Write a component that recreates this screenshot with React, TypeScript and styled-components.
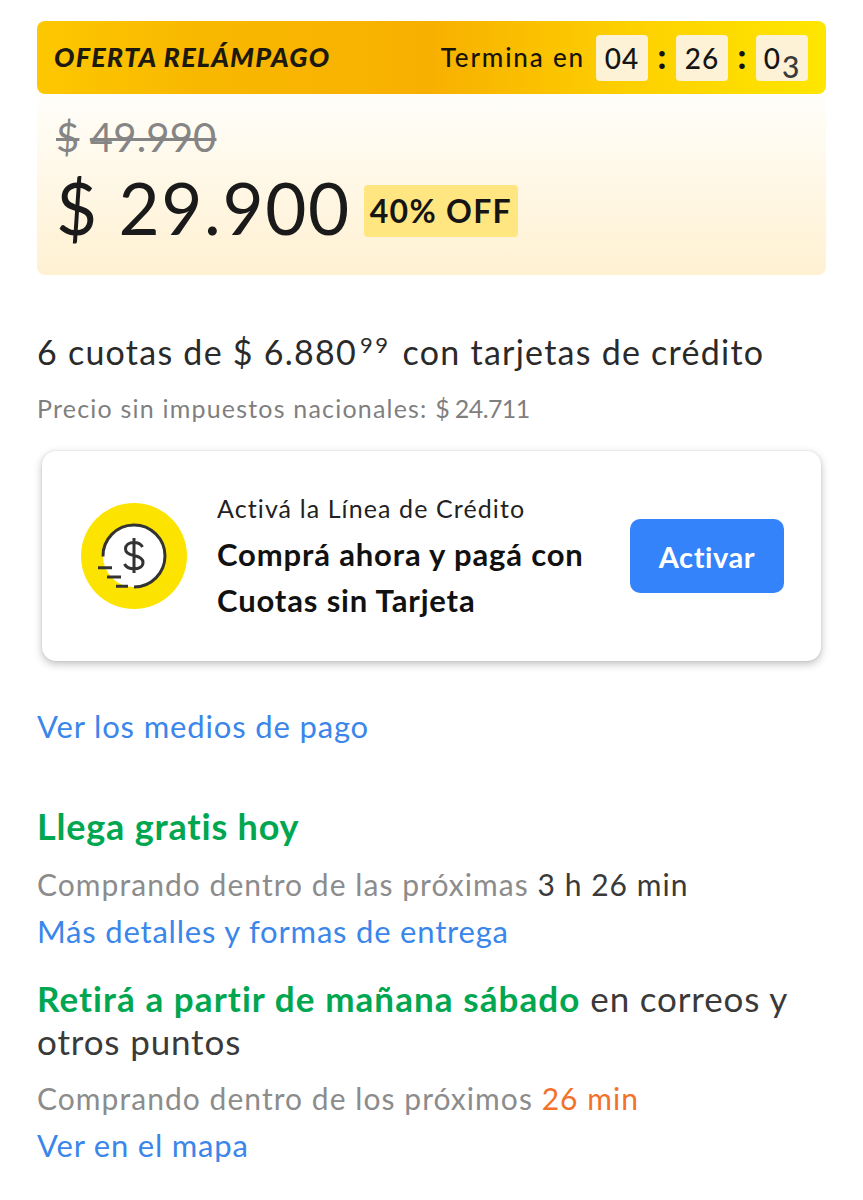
import React from 'react';
import styled, { createGlobalStyle } from 'styled-components';

const Global = createGlobalStyle`
  html, body { margin: 0; padding: 0; background: #fff; }
  body { font-family: Lato, "Noto Sans", sans-serif; color: #1c1c1c; }
`;
const Page = styled.div`
  width: 863px; height: 1200px; box-sizing: border-box; padding: 21px 37px 0 37px; overflow: hidden;
`;
const Banner = styled.div`
  height: 73px; display: flex; align-items: center; justify-content: space-between;
  padding: 0 18px 0 17px; border-radius: 8px;
  background: linear-gradient(90deg, #fdc800 0%, #f9b800 20%, #f8b000 50%, #fdd000 75%, #ffe600 100%);
`;
const Flash = styled.span`
  font-size: 27px; font-weight: 900; font-style: italic; color: #1c1a10; letter-spacing: 1.2px;
  margin-top: -3px;
`;
const Timer = styled.div`
  display: flex; align-items: center;
`;
const TimerLabel = styled.span`
  font-size: 26px; font-weight: 500; color: #15130a; letter-spacing: 1.85px; margin: -2px 11px 0 0;
`;
const Cell = styled.span`
  width: 52px; height: 46px; border-radius: 4px; background: #fdf2d6;
  display: flex; align-items: center; justify-content: center;
  font-size: 28px; font-weight: 500; color: #151515; letter-spacing: 1px;
`;
const Sub = styled.span`
  font-size: 30px; position: relative; top: 8px; color: #3a3a3a; margin-left: 1px;
`;
const Colon = styled.span`
  width: 28px; text-align: center; font-size: 34px; font-weight: 900; color: #111; line-height: 1; margin-top: -4px;
`;
const Panel = styled.div`
  height: 181px; box-sizing: border-box; padding: 19px 0 0 19px; border-radius: 0 0 8px 8px;
  background: linear-gradient(180deg, #fffefa 0%, #fff1d2 100%);
`;
const OldPrice = styled.div`
  font-size: 40px; line-height: 48px; height: 48px; color: #858585; letter-spacing: 0.2px;
`;
const Strike = styled.span`
  text-decoration: line-through; text-decoration-thickness: 3px;
`;
const PriceRow = styled.div`
  display: flex; align-items: center; margin-top: 9px;
`;
const Price = styled.span`
  font-size: 71px; line-height: 76px; font-weight: 400; color: #1a1a1a; letter-spacing: 1.6px;
`;
const Off = styled.span`
  margin-left: 13px; margin-top: 5px; height: 52px; width: 154px; border-radius: 4px; background: #ffe680;
  display: flex; align-items: center; justify-content: center;
  font-size: 32px; font-weight: 700; color: #151515; letter-spacing: 1.3px;
`;
const Installments = styled.div`
  margin-top: 55px; font-size: 34px; line-height: 44px; color: #2a2a2a; letter-spacing: 1.25px;
`;
const Cents = styled.span`
  font-size: 22px; line-height: 0; vertical-align: 12px; margin: 0 2px 0 3px; letter-spacing: 2.6px;
`;
const NoTax = styled.div`
  margin-top: 18px; font-size: 25px; line-height: 32px; color: #7f7f7f; letter-spacing: 1.2px;
`;
const NoTaxAmount = styled.span`
  letter-spacing: -0.6px;
`;
const Card = styled.div`
  margin: 27px 5px 0 5px; height: 210px; box-sizing: border-box; border-radius: 14px; background: #fff;
  box-shadow: 0 3px 8px rgba(0,0,0,0.25), 0 0 2px rgba(0,0,0,0.12);
  display: flex; align-items: center; padding: 0 37px 0 39px;
`;
const CoinIcon = styled.svg`
  width: 106px; height: 106px; flex: none;
`;
const CardText = styled.div`
  flex: 1; margin-left: 30px; padding-top: 1px;
`;
const CardEyebrow = styled.div`
  font-size: 25px; line-height: 34px; margin-bottom: 6px; color: #222; letter-spacing: 1.1px;
`;
const CardTitle = styled.div`
  font-size: 31px; line-height: 46px; font-weight: 700; color: #111; letter-spacing: 0.85px;
`;
const ActivateButton = styled.button`
  width: 154px; height: 74px; border: 0; border-radius: 10px; background: #3483fa; color: #fff;
  font-family: inherit; font-size: 29px; font-weight: 700; letter-spacing: 0.6px; padding: 0; flex: none;
`;
const PayLink = styled.a`
  display: block; margin-top: 43px; color: #3a86ea; font-size: 31px; line-height: 44px; letter-spacing: 0.85px;
`;
const Arrival = styled.div`
  margin-top: 55px; color: #00a650; font-size: 36px; line-height: 46px; font-weight: 700; letter-spacing: 0.8px;
`;
const Hint = styled.div`
  margin-top: 13px; color: #8c8c8c; font-size: 30px; line-height: 44px; letter-spacing: 1.05px;
`;
const Strong = styled.span<{ $orange?: boolean }>`
  color: ${p => (p.$orange ? '#f2722c' : '#3a3a3a')};
`;
const InfoLink = styled.a`
  display: block; margin-top: 3px; color: #3a86ea; font-size: 31px; line-height: 44px; letter-spacing: 0.8px;
`;
const Pickup = styled.div`
  margin-top: 24px; color: #3a3a3a; font-size: 35px; line-height: 43px; letter-spacing: 0.85px;
`;
const PickupStrong = styled.span`
  color: #00a650; font-weight: 700; letter-spacing: 1.08px;
`;

export default function App() {
  return (
    <Page>
      <Global />
      <Banner>
        <Flash>OFERTA RELÁMPAGO</Flash>
        <Timer>
          <TimerLabel>Termina en</TimerLabel>
          <Cell>04</Cell>
          <Colon>:</Colon>
          <Cell>26</Cell>
          <Colon>:</Colon>
          <Cell>0<Sub>3</Sub></Cell>
        </Timer>
      </Banner>
      <Panel>
        <OldPrice><Strike>$</Strike> <Strike>49.990</Strike></OldPrice>
        <PriceRow>
          <Price>$ 29.900</Price>
          <Off>40% OFF</Off>
        </PriceRow>
      </Panel>
      <Installments>6 cuotas de $ 6.880<Cents>99</Cents> con tarjetas de crédito</Installments>
      <NoTax>Precio sin impuestos nacionales: <NoTaxAmount>$ 24.711</NoTaxAmount></NoTax>
      <Card>
        <CoinIcon viewBox="0 0 106 106">
          <circle cx="53" cy="53" r="53" fill="#fde400" />
          <circle cx="53" cy="53" r="31" fill="#fff" />
          <path d="M22 53.5 A31 31 0 1 1 53 84" fill="none" stroke="#333" strokeWidth="3" />
          <path d="M17 64.7H31M26 74H40M35 83.3H47" fill="none" stroke="#333" strokeWidth="3" />
          <path d="M61.5 44C60 41.2 57 39.5 53 39.5C48 39.5 44.5 42 44.5 46C44.5 50 48 51.5 53 52.5C58 53.5 62 55 62 59.5C62 63.5 58 65.8 53 65.8C48.5 65.8 45 64 43.5 61M53 35V70" fill="none" stroke="#333" strokeWidth="3" />
        </CoinIcon>
        <CardText>
          <CardEyebrow>Activá la Línea de Crédito</CardEyebrow>
          <CardTitle>Comprá ahora y pagá con<br />Cuotas sin Tarjeta</CardTitle>
        </CardText>
        <ActivateButton>Activar</ActivateButton>
      </Card>
      <PayLink>Ver los medios de pago</PayLink>
      <Arrival>Llega gratis hoy</Arrival>
      <Hint>Comprando dentro de las próximas <Strong>3 h 26 min</Strong></Hint>
      <InfoLink>Más detalles y formas de entrega</InfoLink>
      <Pickup><PickupStrong>Retirá a partir de mañana sábado</PickupStrong> en correos y<br />otros puntos</Pickup>
      <Hint>Comprando dentro de los próximos <Strong $orange>26 min</Strong></Hint>
      <InfoLink>Ver en el mapa</InfoLink>
    </Page>
  );
}
